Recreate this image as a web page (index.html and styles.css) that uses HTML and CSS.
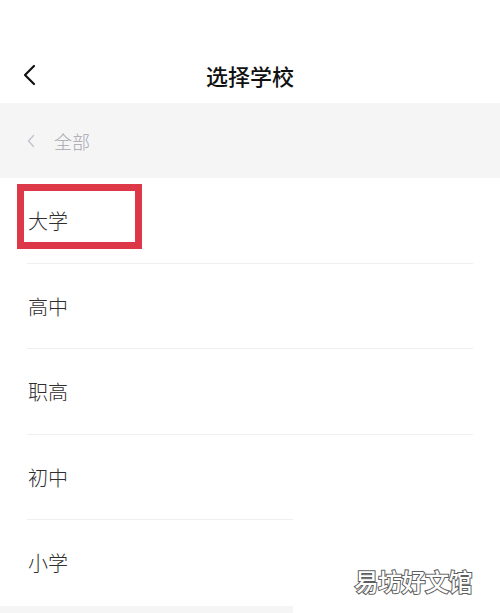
FILE: index.html
```html
<!DOCTYPE html>
<html lang="zh-CN">
<head>
<meta charset="utf-8">
<title>选择学校</title>
<link rel="stylesheet" href="styles.css">
</head>
<body>
<div class="screen">
  <div class="status"></div>
  <header class="nav">
    <span class="nav-back">
      <svg width="16" height="22" viewBox="0 0 16 22"><path d="M12 2 L3 11 L12 20" fill="none" stroke="#111" stroke-width="2.2" stroke-linecap="round" stroke-linejoin="round"/></svg>
    </span>
    <h1 class="nav-title">选择学校</h1>
  </header>
  <div class="crumb">
    <svg class="crumb-arrow" width="8" height="14" viewBox="0 0 8 14"><path d="M6.5 1.5 L1.5 7 L6.5 12.5" fill="none" stroke="#c4c4cc" stroke-width="1.4" stroke-linecap="round" stroke-linejoin="round"/></svg>
    <span class="crumb-text">全部</span>
  </div>
  <ul class="list">
    <li class="item">大学</li>
    <li class="item">高中</li>
    <li class="item">职高</li>
    <li class="item item--short">初中</li>
    <li class="item item--last">小学</li>
    <div class="highlight"></div>
  </ul>
  <div class="footer-strip"></div>
  <div class="watermark">易坊好文馆</div>
</div>
</body>
</html>
```
FILE: styles.css
```css
* { box-sizing: border-box; }
html, body {
  margin: 0;
  padding: 0;
  background: #fff;
}
body {
  font-family: "Noto Sans CJK SC", "Noto Sans", sans-serif;
  color: #222;
}
.screen {
  position: relative;
  width: 500px;
  height: 613px;
  overflow: hidden;
}
.status { height: 48px; }
.nav {
  position: relative;
  height: 55px;
  display: flex;
  align-items: center;
  justify-content: center;
}
.nav-back {
  position: absolute;
  left: 22px;
  top: 16px;
  display: flex;
}
.nav-title {
  margin: 0;
  font-size: 22px;
  font-weight: 500;
  color: #111;
  line-height: 1;
  margin-top: -2px;
}
.crumb {
  height: 75px;
  background: #f5f5f6;
  display: flex;
  align-items: center;
  padding-left: 27px;
}
.crumb-arrow { margin-right: 19px; margin-top: 1px; }
.crumb-text {
  font-size: 18px;
  font-weight: 300;
  color: #a6a6ad;
  line-height: 1;
}
.list {
  position: relative;
  list-style: none;
  margin: 0;
  padding: 0;
}
.item {
  position: relative;
  height: 85.5px;
  display: flex;
  align-items: center;
  font-size: 20px;
  font-weight: 300;
  color: #2e2e2e;
  padding-left: 28px;
}
/* row separator, inset from both edges */
.item::after {
  content: "";
  position: absolute;
  left: 27px;
  right: 27px;
  bottom: 0;
  height: 1px;
  background: #efefef;
}
.item--short::after { right: 207px; }
.item--last::after { display: none; }
.highlight {
  position: absolute;
  left: 17px;
  top: 6px;
  width: 125px;
  height: 65px;
  border: 7px solid #dc3848;
}
.footer-strip {
  width: 293px;
  height: 10px;
  background: #f5f5f6;
}
.watermark {
  position: absolute;
  right: 28px;
  bottom: 20px;
  font-size: 24px;
  font-weight: 500;
  line-height: 1;
  color: #fff;
  letter-spacing: -0.5px;
  -webkit-text-stroke: 2px #5e5e5e;
  paint-order: stroke fill;
}
```
